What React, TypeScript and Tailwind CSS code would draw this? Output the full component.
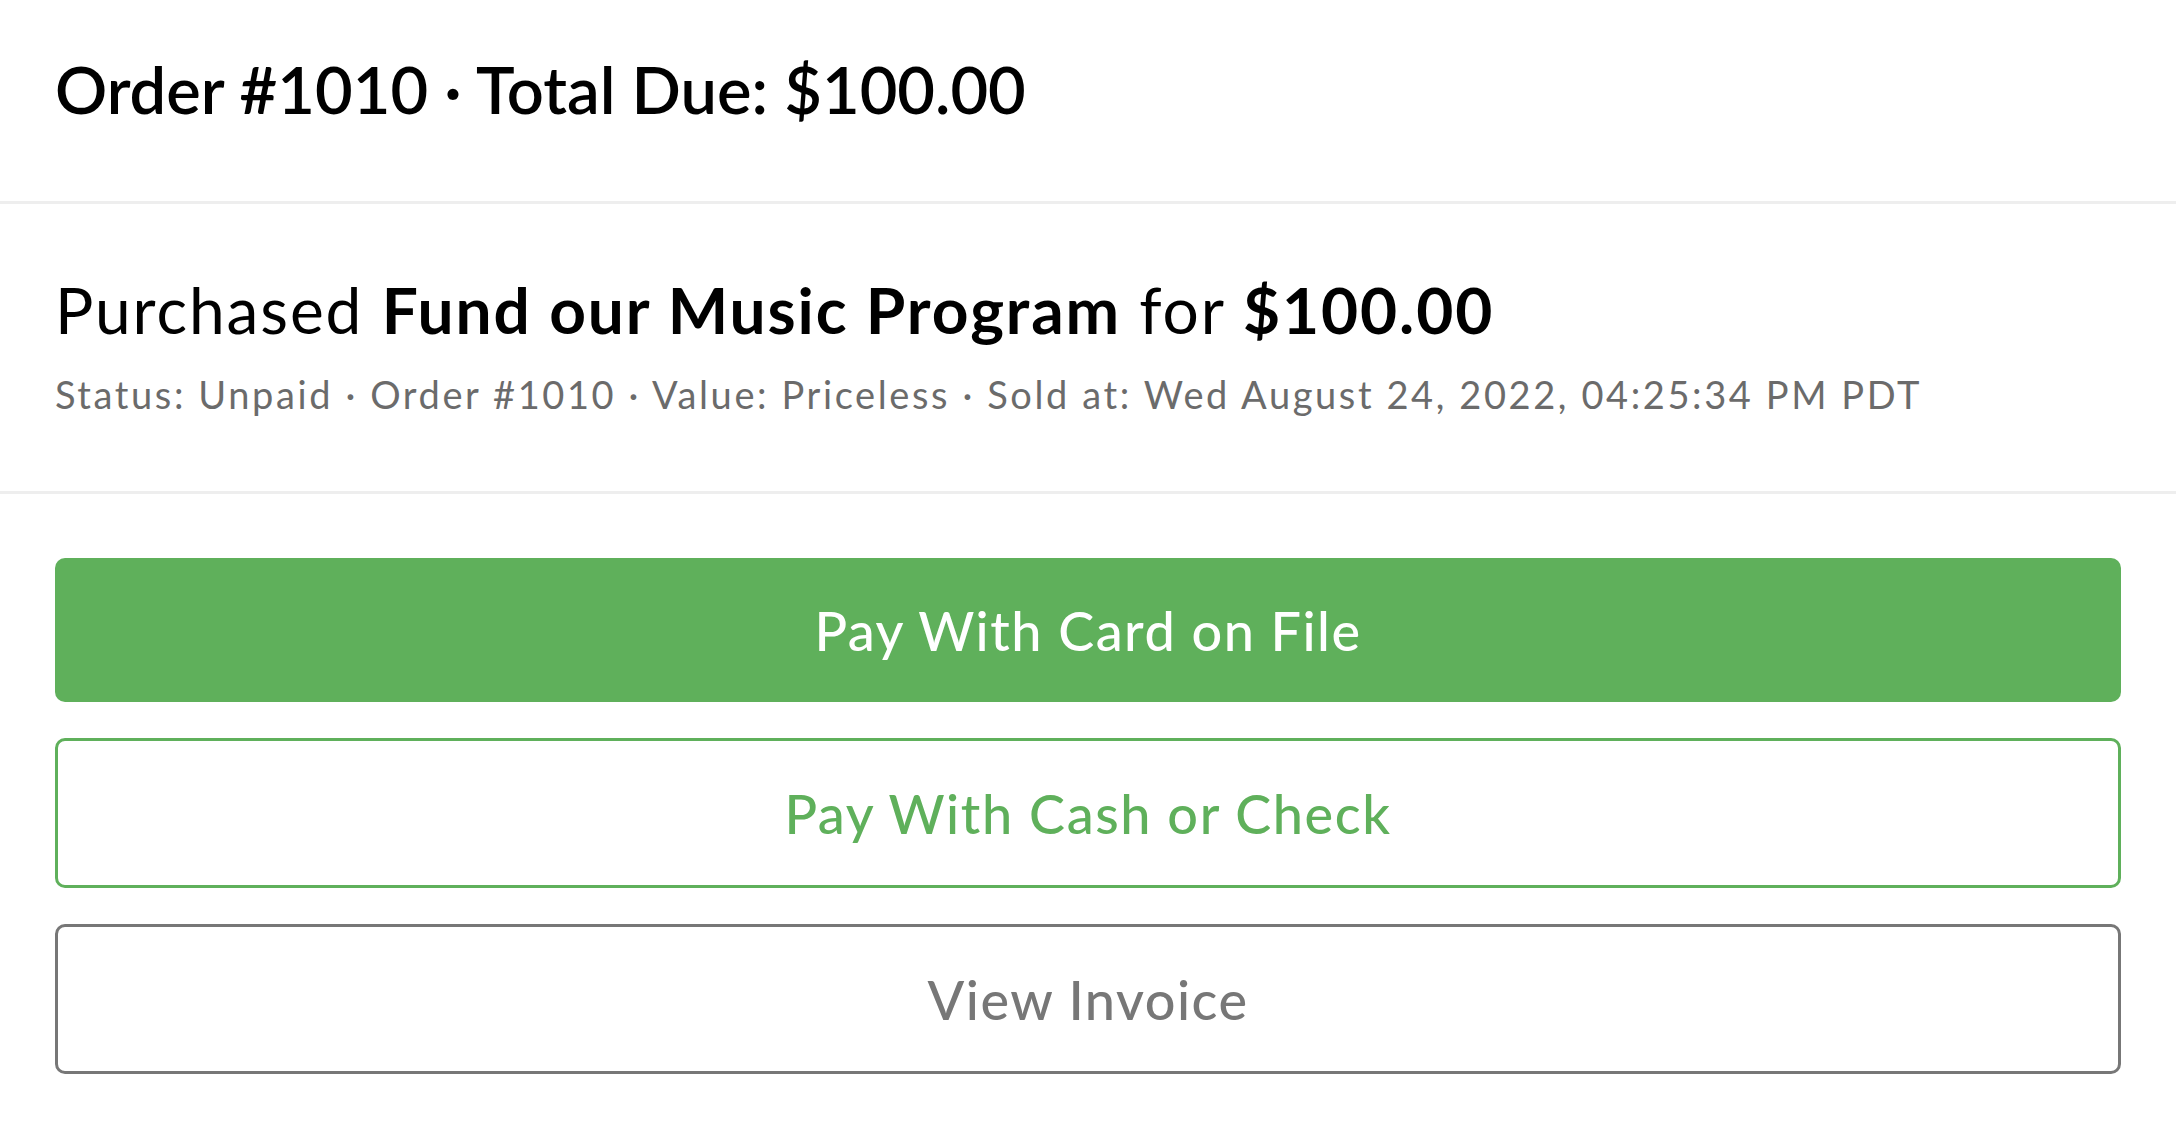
import React from 'react';

const font = { fontFamily: 'Lato, "Noto Sans", sans-serif' };

const App: React.FC = () => {
  return (
    <div className="min-h-screen bg-white text-black" style={font}>
      {/* Header */}
      <div className="px-[55px] pt-[57px] pb-[79px] border-b-[3px] border-[#eeeeee]">
        <h1 className="text-[65px] leading-none font-semibold">Order #1010 · Total Due: $100.00</h1>
      </div>

      {/* Order summary */}
      <div className="px-[55px] pt-[74px] pb-[78px] border-b-[3px] border-[#eeeeee]">
        <p className="text-[64px] leading-none tracking-[1.9px]">
          Purchased <span className="font-bold">Fund our Music Program</span> for <span className="font-bold">$100.00</span>
        </p>
        <p className="mt-[33px] text-[38px] leading-none tracking-[2.6px] text-[#6b6b6b]">
          Status: Unpaid · Order #1010 · Value: Priceless · Sold at: Wed August 24, 2022, 04:25:34 PM PDT
        </p>
      </div>

      {/* Actions */}
      <div className="px-[55px] pt-[64px] flex flex-col gap-[36px]">
        <button className="h-[144px] w-full rounded-[10px] bg-[#5fb05b] text-white text-[54px] tracking-[1.5px] font-medium">
          Pay With Card on File
        </button>
        <button className="h-[150px] w-full rounded-[10px] border-[3px] border-[#5fb05b] bg-white text-[#5fb05b] text-[54px] tracking-[1.6px] font-medium">
          Pay With Cash or Check
        </button>
        <button className="h-[150px] w-full rounded-[10px] border-[3px] border-[#777777] bg-white text-[#777777] text-[54px] tracking-[1.5px] font-medium">
          View Invoice
        </button>
      </div>
    </div>
  );
};

export default App;
